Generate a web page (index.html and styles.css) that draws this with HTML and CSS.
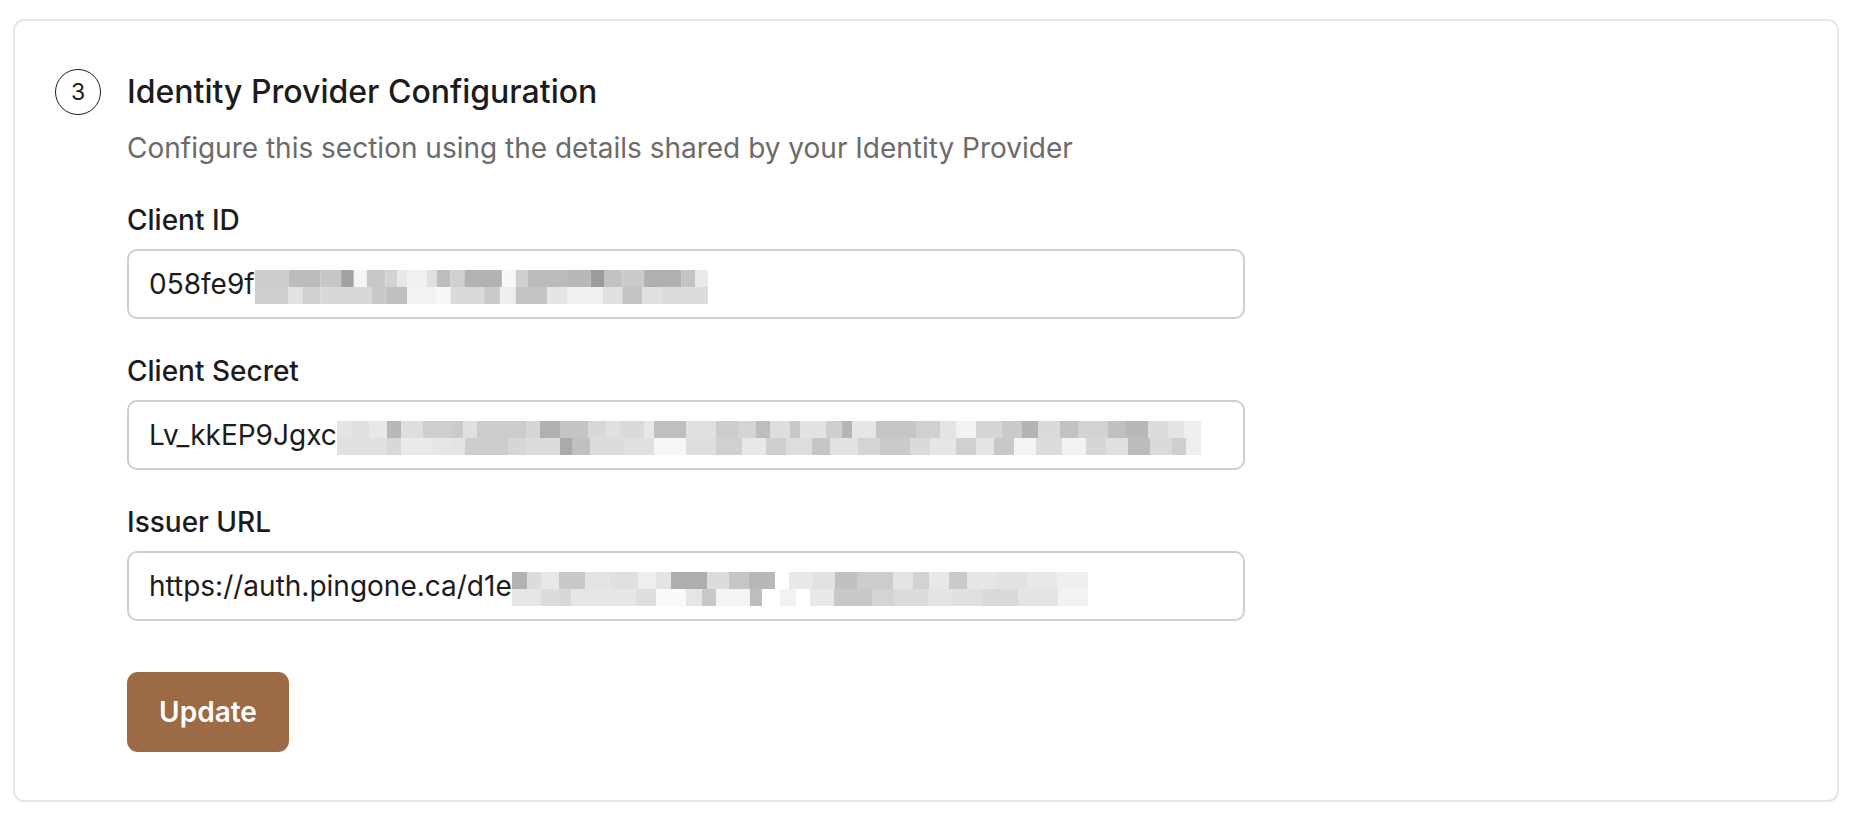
FILE: index.html
```html
<!DOCTYPE html>
<html lang="en">
<head>
<meta charset="utf-8">
<title>Identity Provider Configuration</title>
<link rel="stylesheet" href="styles.css">
</head>
<body>
<main class="page">
  <section class="card">
    <div class="step">
      <div class="step-num">3</div>
      <div class="step-body">
        <h2 class="title">Identity Provider Configuration</h2>
        <p class="subtitle">Configure this section using the details shared by your Identity Provider</p>

        <div class="field">
          <label class="label">Client ID</label>
          <div class="input">
            <span class="value">058fe9f</span>
            <svg class="redact" width="453" height="34" viewBox="0 0 453 34" aria-hidden="true">
              <rect x="0" y="0" width="33.6" height="17" fill="#cccccc"/>
              <rect x="33.6" y="0" width="31.6" height="17" fill="#bcbcbc"/>
              <rect x="65.2" y="0" width="20.9" height="17" fill="#c6c6c6"/>
              <rect x="86.1" y="0" width="12.7" height="17" fill="#a2a2a2"/>
              <rect x="98.8" y="0" width="13" height="17" fill="#f5f5f5"/>
              <rect x="111.8" y="0" width="18.6" height="17" fill="#c8c8c8"/>
              <rect x="130.4" y="0" width="11.9" height="17" fill="#d2d2d2"/>
              <rect x="142.2" y="0" width="9.9" height="17" fill="#e8e8e8"/>
              <rect x="152.1" y="0" width="19.8" height="17" fill="#f0f0f0"/>
              <rect x="171.8" y="0" width="9.9" height="17" fill="#e0e0e0"/>
              <rect x="181.7" y="0" width="13.8" height="17" fill="#bdbdbd"/>
              <rect x="195.5" y="0" width="13.9" height="17" fill="#d0d0d0"/>
              <rect x="209.4" y="0" width="37.5" height="17" fill="#b2b2b2"/>
              <rect x="246.9" y="0" width="13.8" height="17" fill="#f8f8f8"/>
              <rect x="260.7" y="0" width="11.9" height="17" fill="#cfcfcf"/>
              <rect x="272.5" y="0" width="39.5" height="17" fill="#bbbbbb"/>
              <rect x="312" y="0" width="23.7" height="17" fill="#b8b8b8"/>
              <rect x="335.7" y="0" width="13.9" height="17" fill="#9c9c9c"/>
              <rect x="349.6" y="0" width="17.8" height="17" fill="#c2c2c2"/>
              <rect x="367.3" y="0" width="21.8" height="17" fill="#cacaca"/>
              <rect x="389.1" y="0" width="37.5" height="17" fill="#b0b0b0"/>
              <rect x="426.6" y="0" width="13.8" height="17" fill="#c4c4c4"/>
              <rect x="440.4" y="0" width="12.6" height="17" fill="#eaeaea"/>
              <rect x="0" y="17" width="33.6" height="17" fill="#cfcfcf"/>
              <rect x="33.6" y="17" width="13.8" height="17" fill="#e2e2e2"/>
              <rect x="47.4" y="17" width="17.8" height="17" fill="#d0d0d0"/>
              <rect x="65.2" y="17" width="51.4" height="17" fill="#d8d8d8"/>
              <rect x="116.6" y="17" width="13.8" height="17" fill="#c8c8c8"/>
              <rect x="130.4" y="17" width="21.7" height="17" fill="#c0c0c0"/>
              <rect x="152.1" y="17" width="29.6" height="17" fill="#f2f2f2"/>
              <rect x="181.7" y="17" width="13.8" height="17" fill="#f8f8f8"/>
              <rect x="195.5" y="17" width="33.6" height="17" fill="#dadada"/>
              <rect x="229.1" y="17" width="15.8" height="17" fill="#cacaca"/>
              <rect x="244.9" y="17" width="15.8" height="17" fill="#eeeeee"/>
              <rect x="260.7" y="17" width="31.6" height="17" fill="#c4c4c4"/>
              <rect x="292.3" y="17" width="19.8" height="17" fill="#e4e4e4"/>
              <rect x="312" y="17" width="35.6" height="17" fill="#f0f0f0"/>
              <rect x="347.6" y="17" width="19.8" height="17" fill="#e0e0e0"/>
              <rect x="367.3" y="17" width="19.8" height="17" fill="#c4c4c4"/>
              <rect x="387.1" y="17" width="19.8" height="17" fill="#e0e0e0"/>
              <rect x="406.9" y="17" width="46.1" height="17" fill="#dcdcdc"/>
            </svg>
          </div>
        </div>

        <div class="field">
          <label class="label">Client Secret</label>
          <div class="input">
            <span class="value">Lv_kkEP9Jgxc</span>
            <svg class="redact" width="864" height="34" viewBox="0 0 864 34" aria-hidden="true">
              <rect x="0" y="0" width="16" height="17" fill="#e4e4e4"/>
              <rect x="16" y="0" width="16" height="17" fill="#e0e0e0"/>
              <rect x="32" y="0" width="18" height="17" fill="#e8e8e8"/>
              <rect x="50" y="0" width="14" height="17" fill="#b8b8b8"/>
              <rect x="64" y="0" width="22" height="17" fill="#dedede"/>
              <rect x="86" y="0" width="28" height="17" fill="#cecece"/>
              <rect x="114" y="0" width="12" height="17" fill="#cacaca"/>
              <rect x="126" y="0" width="14" height="17" fill="#e0e0e0"/>
              <rect x="140" y="0" width="49" height="17" fill="#cccccc"/>
              <rect x="189" y="0" width="14" height="17" fill="#d6d6d6"/>
              <rect x="203" y="0" width="20" height="17" fill="#b0b0b0"/>
              <rect x="223" y="0" width="28" height="17" fill="#c4c4c4"/>
              <rect x="251" y="0" width="18" height="17" fill="#d8d8d8"/>
              <rect x="269" y="0" width="14" height="17" fill="#e0e0e0"/>
              <rect x="283" y="0" width="24" height="17" fill="#dadada"/>
              <rect x="307" y="0" width="10" height="17" fill="#e8e8e8"/>
              <rect x="317" y="0" width="32" height="17" fill="#bfbfbf"/>
              <rect x="349" y="0" width="30" height="17" fill="#e0e0e0"/>
              <rect x="379" y="0" width="22" height="17" fill="#cccccc"/>
              <rect x="401" y="0" width="18" height="17" fill="#d4d4d4"/>
              <rect x="419" y="0" width="14" height="17" fill="#bdbdbd"/>
              <rect x="433" y="0" width="20" height="17" fill="#dedede"/>
              <rect x="453" y="0" width="10" height="17" fill="#c8c8c8"/>
              <rect x="463" y="0" width="26" height="17" fill="#e2e2e2"/>
              <rect x="489" y="0" width="16" height="17" fill="#cfcfcf"/>
              <rect x="505" y="0" width="10" height="17" fill="#b5b5b5"/>
              <rect x="515" y="0" width="24" height="17" fill="#e6e6e6"/>
              <rect x="539" y="0" width="40" height="17" fill="#c6c6c6"/>
              <rect x="579" y="0" width="24" height="17" fill="#d0d0d0"/>
              <rect x="603" y="0" width="16" height="17" fill="#e4e4e4"/>
              <rect x="619" y="0" width="20" height="17" fill="#f2f2f2"/>
              <rect x="639" y="0" width="26" height="17" fill="#d6d6d6"/>
              <rect x="665" y="0" width="20" height="17" fill="#cacaca"/>
              <rect x="685" y="0" width="16" height="17" fill="#b4b4b4"/>
              <rect x="701" y="0" width="22" height="17" fill="#dadada"/>
              <rect x="723" y="0" width="18" height="17" fill="#c2c2c2"/>
              <rect x="741" y="0" width="30" height="17" fill="#d2d2d2"/>
              <rect x="771" y="0" width="18" height="17" fill="#c0c0c0"/>
              <rect x="789" y="0" width="22" height="17" fill="#b8b8b8"/>
              <rect x="811" y="0" width="20" height="17" fill="#dcdcdc"/>
              <rect x="831" y="0" width="16" height="17" fill="#e4e4e4"/>
              <rect x="847" y="0" width="17" height="17" fill="#efefef"/>
              <rect x="0" y="17" width="50" height="17" fill="#e0e0e0"/>
              <rect x="50" y="17" width="14" height="17" fill="#d8d8d8"/>
              <rect x="64" y="17" width="32" height="17" fill="#eaeaea"/>
              <rect x="96" y="17" width="18" height="17" fill="#e6e6e6"/>
              <rect x="114" y="17" width="14" height="17" fill="#e4e4e4"/>
              <rect x="128" y="17" width="43" height="17" fill="#cdcdcd"/>
              <rect x="171" y="17" width="18" height="17" fill="#d6d6d6"/>
              <rect x="189" y="17" width="34" height="17" fill="#dcdcdc"/>
              <rect x="223" y="17" width="12" height="17" fill="#aaaaaa"/>
              <rect x="235" y="17" width="18" height="17" fill="#c0c0c0"/>
              <rect x="253" y="17" width="34" height="17" fill="#dcdcdc"/>
              <rect x="287" y="17" width="30" height="17" fill="#e0e0e0"/>
              <rect x="317" y="17" width="32" height="17" fill="#f6f6f6"/>
              <rect x="349" y="17" width="30" height="17" fill="#dedede"/>
              <rect x="379" y="17" width="26" height="17" fill="#d0d0d0"/>
              <rect x="405" y="17" width="24" height="17" fill="#e8e8e8"/>
              <rect x="429" y="17" width="20" height="17" fill="#cfcfcf"/>
              <rect x="449" y="17" width="26" height="17" fill="#dddddd"/>
              <rect x="475" y="17" width="18" height="17" fill="#c6c6c6"/>
              <rect x="493" y="17" width="28" height="17" fill="#e2e2e2"/>
              <rect x="521" y="17" width="22" height="17" fill="#d4d4d4"/>
              <rect x="543" y="17" width="30" height="17" fill="#cacaca"/>
              <rect x="573" y="17" width="20" height="17" fill="#dadada"/>
              <rect x="593" y="17" width="26" height="17" fill="#e6e6e6"/>
              <rect x="619" y="17" width="20" height="17" fill="#d0d0d0"/>
              <rect x="639" y="17" width="18" height="17" fill="#e4e4e4"/>
              <rect x="657" y="17" width="20" height="17" fill="#c8c8c8"/>
              <rect x="677" y="17" width="22" height="17" fill="#f4f4f4"/>
              <rect x="699" y="17" width="26" height="17" fill="#dcdcdc"/>
              <rect x="725" y="17" width="24" height="17" fill="#f2f2f2"/>
              <rect x="749" y="17" width="20" height="17" fill="#d6d6d6"/>
              <rect x="769" y="17" width="22" height="17" fill="#e0e0e0"/>
              <rect x="791" y="17" width="22" height="17" fill="#bcbcbc"/>
              <rect x="813" y="17" width="22" height="17" fill="#dadada"/>
              <rect x="835" y="17" width="14" height="17" fill="#cfcfcf"/>
              <rect x="849" y="17" width="15" height="17" fill="#eeeeee"/>
            </svg>
          </div>
        </div>

        <div class="field">
          <label class="label">Issuer URL</label>
          <div class="input">
            <span class="value">https://auth.pingone.ca/d1e</span>
            <svg class="redact" width="576" height="34" viewBox="0 0 576 34" aria-hidden="true">
              <rect x="0" y="0" width="15" height="17" fill="#b2b2b2"/>
              <rect x="15" y="0" width="14" height="17" fill="#dcdcdc"/>
              <rect x="29" y="0" width="18" height="17" fill="#e8e8e8"/>
              <rect x="47" y="0" width="26" height="17" fill="#c8c8c8"/>
              <rect x="73" y="0" width="25" height="17" fill="#e4e4e4"/>
              <rect x="98" y="0" width="28" height="17" fill="#e0e0e0"/>
              <rect x="126" y="0" width="18" height="17" fill="#eeeeee"/>
              <rect x="144" y="0" width="15" height="17" fill="#e4e4e4"/>
              <rect x="159" y="0" width="36" height="17" fill="#aeaeae"/>
              <rect x="195" y="0" width="22" height="17" fill="#dcdcdc"/>
              <rect x="217" y="0" width="20" height="17" fill="#c6c6c6"/>
              <rect x="237" y="0" width="26" height="17" fill="#b8b8b8"/>
              <rect x="263" y="0" width="14" height="17" fill="#ffffff"/>
              <rect x="277" y="0" width="24" height="17" fill="#e8e8e8"/>
              <rect x="301" y="0" width="22" height="17" fill="#e2e2e2"/>
              <rect x="323" y="0" width="22" height="17" fill="#c0c0c0"/>
              <rect x="345" y="0" width="36" height="17" fill="#cccccc"/>
              <rect x="381" y="0" width="20" height="17" fill="#e4e4e4"/>
              <rect x="401" y="0" width="16" height="17" fill="#d2d2d2"/>
              <rect x="417" y="0" width="20" height="17" fill="#e8e8e8"/>
              <rect x="437" y="0" width="18" height="17" fill="#cacaca"/>
              <rect x="455" y="0" width="30" height="17" fill="#e6e6e6"/>
              <rect x="485" y="0" width="30" height="17" fill="#e2e2e2"/>
              <rect x="515" y="0" width="30" height="17" fill="#e8e8e8"/>
              <rect x="545" y="0" width="31" height="17" fill="#efefef"/>
              <rect x="0" y="17" width="29" height="17" fill="#e6e6e6"/>
              <rect x="29" y="17" width="18" height="17" fill="#dcdcdc"/>
              <rect x="47" y="17" width="12" height="17" fill="#d8d8d8"/>
              <rect x="59" y="17" width="65" height="17" fill="#e6e6e6"/>
              <rect x="124" y="17" width="20" height="17" fill="#dedede"/>
              <rect x="144" y="17" width="30" height="17" fill="#fafafa"/>
              <rect x="174" y="17" width="16" height="17" fill="#e6e6e6"/>
              <rect x="190" y="17" width="14" height="17" fill="#c8c8c8"/>
              <rect x="204" y="17" width="34" height="17" fill="#f4f4f4"/>
              <rect x="238" y="17" width="12" height="17" fill="#bdbdbd"/>
              <rect x="250" y="17" width="18" height="17" fill="#ffffff"/>
              <rect x="268" y="17" width="16" height="17" fill="#f2f2f2"/>
              <rect x="284" y="17" width="14" height="17" fill="#ffffff"/>
              <rect x="298" y="17" width="24" height="17" fill="#e8e8e8"/>
              <rect x="322" y="17" width="38" height="17" fill="#c8c8c8"/>
              <rect x="360" y="17" width="22" height="17" fill="#d4d4d4"/>
              <rect x="382" y="17" width="34" height="17" fill="#dcdcdc"/>
              <rect x="416" y="17" width="24" height="17" fill="#e4e4e4"/>
              <rect x="440" y="17" width="30" height="17" fill="#e0e0e0"/>
              <rect x="470" y="17" width="36" height="17" fill="#dadada"/>
              <rect x="506" y="17" width="40" height="17" fill="#e4e4e4"/>
              <rect x="546" y="17" width="30" height="17" fill="#f2f2f2"/>
            </svg>
          </div>
        </div>

        <button class="btn" type="button">Update</button>
      </div>
    </div>
  </section>
</main>
</body>
</html>
```
FILE: styles.css
```css
* {
  box-sizing: border-box;
}

html, body {
  margin: 0;
  padding: 0;
  background: #ffffff;
}

body {
  font-family: Inter, "Noto Sans", "Liberation Sans", sans-serif;
  color: #1c1c1c;
}

.page {
  padding: 19px 19px 18px 13px;
}

.card {
  border: 2px solid #e6e6e6;
  border-radius: 11px;
  padding: 47px 40px 48px 40px;
  height: 783px;
}

.step {
  display: flex;
  gap: 26px;
  align-items: flex-start;
}

.step-num {
  flex: none;
  width: 46px;
  height: 46px;
  border: 1.5px solid #1c1c1c;
  border-radius: 50%;
  display: flex;
  align-items: center;
  justify-content: center;
  font-size: 23px;
  color: #1c1c1c;
  margin-top: 1px;
}

.step-body {
  flex: 1;
  display: flex;
  flex-direction: column;
  align-items: flex-start;
}

.title {
  margin: 0;
  font-size: 32px;
  font-weight: 500;
  line-height: 48px;
  color: #1c1c1c;
}

.subtitle {
  margin: 14px 0 0 0;
  font-size: 28px;
  font-weight: 400;
  line-height: 36px;
  color: #6b6b6b;
}

.field {
  display: flex;
  flex-direction: column;
  margin-top: 36px;
}

.field + .field {
  margin-top: 34px;
}

.label {
  font-size: 28px;
  font-weight: 500;
  line-height: 36px;
  color: #1c1c1c;
}

.input {
  margin-top: 11px;
  width: 1118px;
  height: 70px;
  border: 2px solid #cfcfcf;
  border-radius: 10px;
  padding: 0 20px;
  display: flex;
  align-items: center;
  overflow: hidden;
}

.value {
  font-size: 28px;
  color: #1c1c1c;
  white-space: nowrap;
}

.redact {
  display: block;
  flex: none;
  margin-top: 6px;
}

.btn {
  margin-top: 51px;
  width: 162px;
  height: 80px;
  border: none;
  border-radius: 11px;
  background: #9c6a45;
  color: #ffffff;
  font-family: Inter, "Noto Sans", "Liberation Sans", sans-serif;
  font-size: 28px;
  font-weight: 600;
  cursor: pointer;
}
```
